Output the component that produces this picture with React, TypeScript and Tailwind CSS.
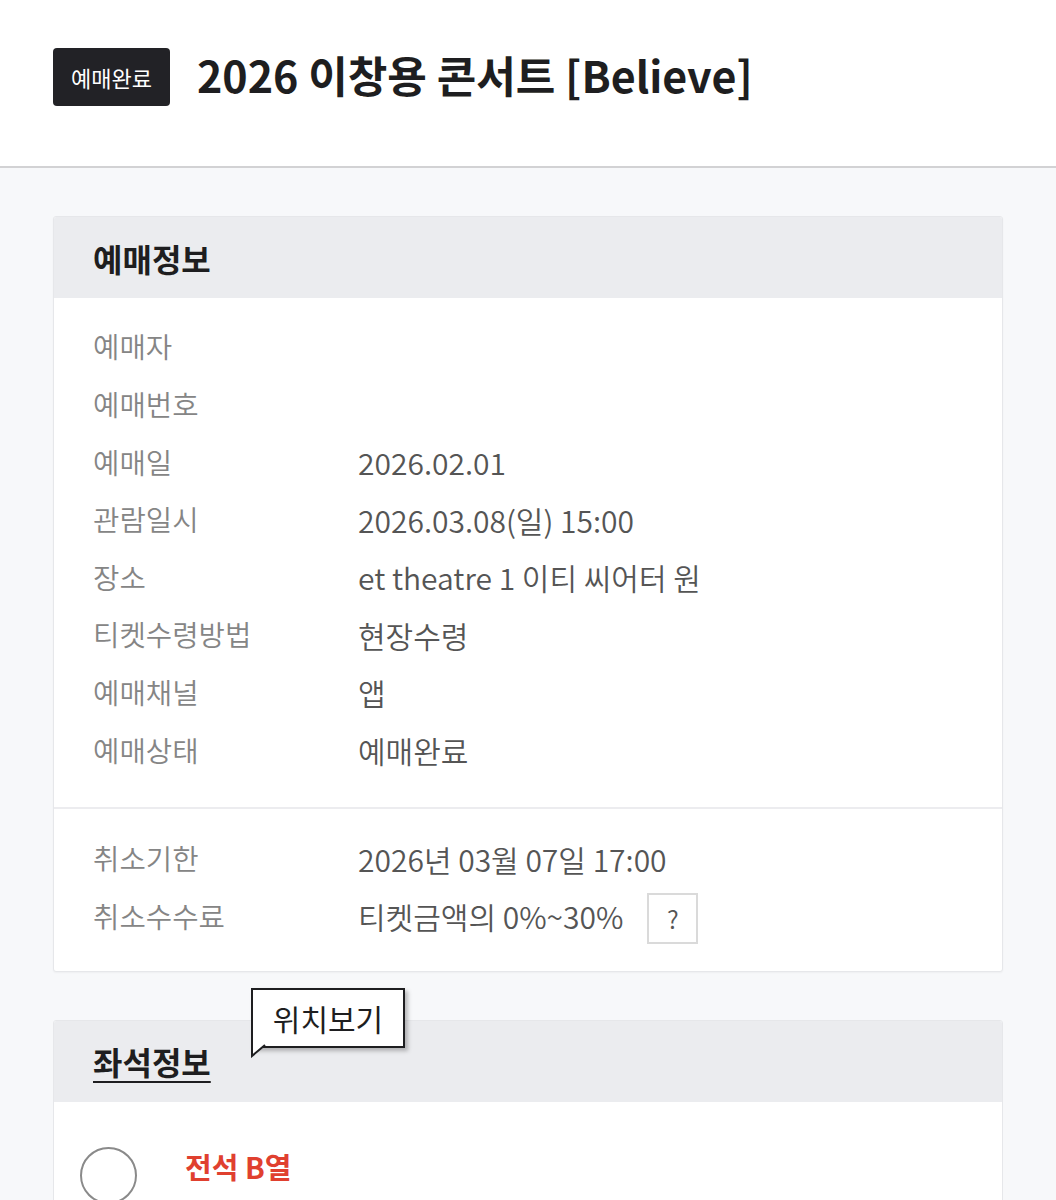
import React from "react";

const font = { fontFamily: '"Noto Sans CJK KR", "Noto Sans", sans-serif' };

function Row({ label, value, children }: { label: string; value?: string; children?: React.ReactNode }) {
  return (
    <div className="flex items-center h-[57.6px] -mt-[1px] mb-[1px]">
      <div className="w-[265px] text-[28.7px] font-[350] text-[#858585] leading-none">{label}</div>
      <div className="flex items-center text-[30px] font-[350] text-[#555555] leading-none">
        {value}
        {children}
      </div>
    </div>
  );
}

export default function App() {
  return (
    <div style={font} className="relative w-[1056px] h-[1200px] overflow-hidden bg-[#f7f8fa]">
      <div className="h-[168px] bg-white border-b-2 border-[#d2d2d4] flex items-start pl-[53px] pt-[48px]">
        <div className="w-[117px] h-[58px] rounded-[4px] bg-[#222226] text-white text-[22px] flex items-center justify-center">
          예매완료
        </div>
        <div className="ml-[27px] h-[58px] -mt-[3px] flex items-center text-[43px] font-semibold text-[#1e1e20] leading-none">
          2026 이창용 콘서트 [Believe]
        </div>
      </div>

      <div className="px-[53px] pt-[48px]">
        <div className="bg-white border border-[#e6e7ea] rounded-[3px] shadow-[0_1px_2px_rgba(0,0,0,0.04)] overflow-hidden">
          <div className="h-[81px] bg-[#ebecef] flex items-center pl-[39px]">
            <span className="text-[32px] font-bold text-[#1e1e20]">예매정보</span>
          </div>
          <div className="pl-[39px] pt-[21px] pb-[27px] border-b-2 border-[#ececef]">
            <Row label="예매자" />
            <Row label="예매번호" />
            <Row label="예매일" value="2026.02.01" />
            <Row label="관람일시" value="2026.03.08(일) 15:00" />
            <Row label="장소" value="et theatre 1 이티 씨어터 원" />
            <Row label="티켓수령방법" value="현장수령" />
            <Row label="예매채널" value="앱" />
            <Row label="예매상태" value="예매완료" />
          </div>
          <div className="pl-[39px] pt-[22px] pb-[25px]">
            <Row label="취소기한" value="2026년 03월 07일 17:00" />
            <Row label="취소수수료" value="티켓금액의 0%~30%">
              <span className="ml-[24px] w-[51px] h-[51px] border-2 border-[#dadada] flex items-center justify-center text-[25px] text-[#555] mt-[5px]">
                ?
              </span>
            </Row>
          </div>
        </div>

        <div className="mt-[48px] bg-white border border-[#e6e7ea] rounded-[3px] overflow-hidden h-[300px]">
          <div className="h-[81px] bg-[#ebecef] flex items-center pl-[39px]">
            <span className="text-[32px] font-bold text-[#1e1e20] underline underline-offset-[6px] decoration-2">좌석정보</span>
          </div>
          <div className="flex items-center pl-[26px] pt-[45px]">
            <div className="w-[57px] h-[57px] rounded-full border-2 border-[#8a8a8a]" />
            <span className="ml-[48px] -mt-[18px] text-[29px] font-bold text-[#e0402f]">전석 B열</span>
          </div>
        </div>
      </div>

      <div className="absolute left-[251px] top-[988px]">
        <div className="relative w-[154px] h-[60px] bg-white border-2 border-[#1e1e20] shadow-[3px_3px_4px_rgba(0,0,0,0.25)] flex items-center justify-center text-[30px] text-[#1e1e20]">
          위치보기
        </div>
        <svg className="absolute left-0 top-[56px]" width="16" height="14" viewBox="0 0 16 14">
          <polygon points="0,0 14,0 1,12" fill="white" />
          <polyline points="1,0 1,12 14,1" fill="none" stroke="#1e1e20" strokeWidth="2" />
        </svg>
      </div>
    </div>
  );
}
